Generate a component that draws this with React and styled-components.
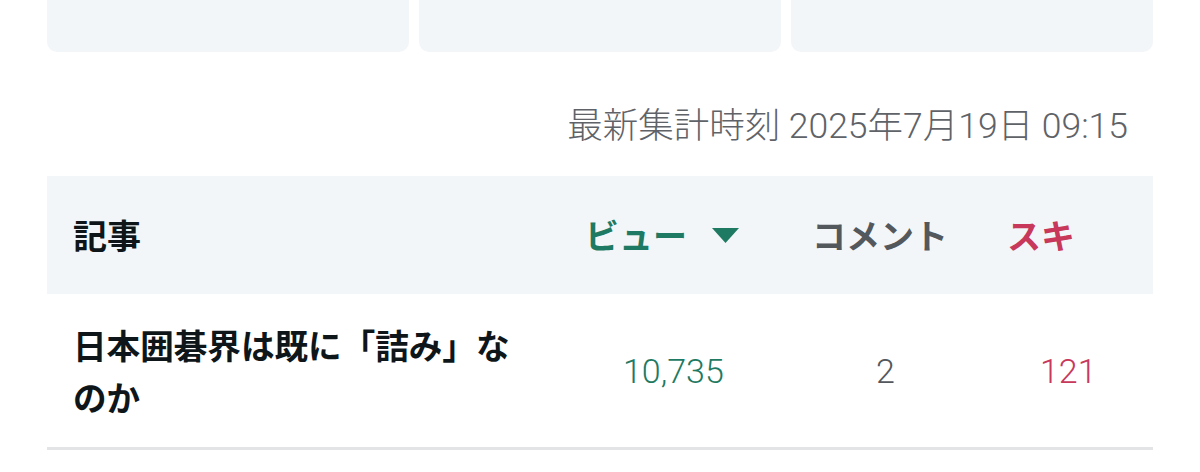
import React from "react";
import styled, { createGlobalStyle } from "styled-components";

const Global = createGlobalStyle`
  html, body { margin: 0; padding: 0; background: #ffffff; }
  body { font-family: Roboto, "Noto Sans CJK JP", sans-serif; }
`;

const Page = styled.div`
  padding: 0 47px;
  width: 1106px;
`;

const Cards = styled.div`
  display: grid;
  grid-template-columns: repeat(3, 1fr);
  gap: 10px;
`;

const Card = styled.div`
  height: 52px;
  background: #f3f6f9;
  border-radius: 0 0 10px 10px;
`;

const Stamp = styled.div`
  margin: 55px 0 31px;
  padding-right: 25px;
  text-align: right;
  font-family: Roboto, "Noto Sans CJK JP", sans-serif;
  font-weight: 300;
  font-size: 35.5px;
  line-height: 38px;
  color: #5f6368;
`;

const Row = styled.div`
  display: grid;
  grid-template-columns: 513px 230px 200px 163px;
  align-items: center;
  background: ${(p) => (p.$head ? "#f3f6f9" : "#ffffff")};
  height: ${(p) => (p.$head ? "118px" : "auto")};
  padding: ${(p) => (p.$head ? "0" : "25px 0 24px")};
  border-bottom: ${(p) => (p.$head ? "none" : "3px solid #e3e4e5")};
`;

const colors = {
  ink: "#0f1619",
  green: "#1e7a62",
  grey: "#53585d",
  red: "#c8385a",
};

const HeadCell = styled.div`
  display: flex;
  align-items: center;
  gap: 25px;
  padding-left: ${(p) => p.$pl}px;
  font-family: "Noto Sans CJK JP", sans-serif;
  font-weight: 700;
  font-size: 34px;
  line-height: 40px;
  color: ${(p) => colors[p.$tone]};
`;

const Title = styled.div`
  padding: 0 40px 0 26px;
  font-family: "Noto Sans CJK JP", sans-serif;
  font-weight: 700;
  font-size: 33.6px;
  line-height: 52px;
  color: ${colors.ink};
`;

const Num = styled.div`
  padding-left: ${(p) => p.$pl}px;
  font-family: Roboto, sans-serif;
  font-weight: 300;
  font-size: 34px;
  line-height: 40px;
  color: ${(p) => colors[p.$tone]};
`;

const Arrow = () => (
  <svg width="27" height="15" viewBox="0 0 27 15" aria-hidden="true">
    <polygon points="0,0 27,0 13.5,15" fill={colors.green} />
  </svg>
);

export default function App() {
  return (
    <Page>
      <Global />
      <Cards>
        <Card />
        <Card />
        <Card />
      </Cards>
      <Stamp>最新集計時刻 2025年7月19日 09:15</Stamp>
      <Row $head>
        <HeadCell $pl={26} $tone="ink">記事</HeadCell>
        <HeadCell $pl={25} $tone="green">
          ビュー
          <Arrow />
        </HeadCell>
        <HeadCell $pl={22} $tone="grey">コメント</HeadCell>
        <HeadCell $pl={17} $tone="red">スキ</HeadCell>
      </Row>
      <Row>
        <Title>日本囲碁界は既に「詰み」なのか</Title>
        <Num $pl={63} $tone="green">10,735</Num>
        <Num $pl={86} $tone="grey">2</Num>
        <Num $pl={50} $tone="red">121</Num>
      </Row>
    </Page>
  );
}
